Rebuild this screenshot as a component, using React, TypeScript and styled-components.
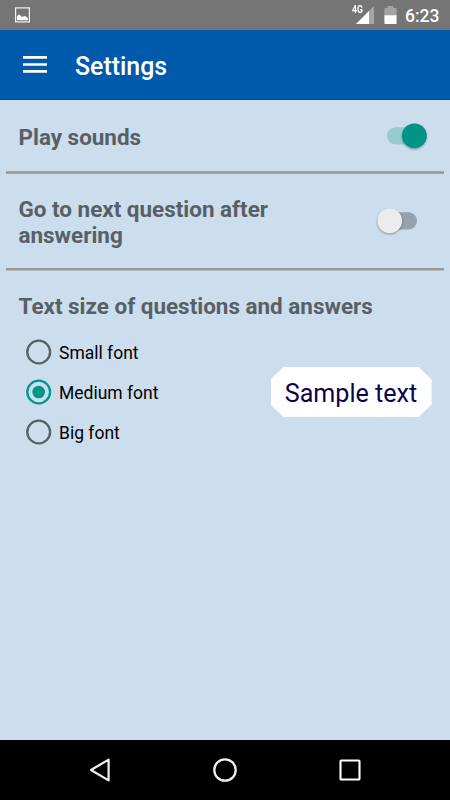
import React, { useState } from "react";
import styled, { createGlobalStyle } from "styled-components";

const GlobalStyle = createGlobalStyle`
  * { box-sizing: border-box; }
  body { margin: 0; font-family: Roboto, "Liberation Sans", sans-serif; }
`;

const Screen = styled.div`
  display: flex;
  flex-direction: column;
  width: 450px;
  height: 800px;
  overflow: hidden;
  background: #ccdded;
`;

const StatusBar = styled.div`
  display: flex;
  align-items: center;
  justify-content: space-between;
  height: 30px;
  padding: 0 10px 0 15px;
  background: #757575;
`;

const StatusIcons = styled.div`
  display: flex;
  align-items: center;
`;

const Clock = styled.span`
  width: 35px;
  margin-left: 8px;
  padding-top: 2px;
  font-size: 17.5px;
  font-weight: 500;
  line-height: 20px;
  white-space: nowrap;
  color: #fff;
`;

const AppBar = styled.header`
  display: flex;
  align-items: center;
  height: 70px;
  padding-left: 23px;
  background: #005aab;
  border-bottom: 1px solid #004a98;
`;

const Title = styled.h1`
  margin: 5px 0 0 28px;
  font-size: 24.9px;
  font-weight: 500;
  line-height: 30px;
  color: #fff;
`;

const Content = styled.main`
  flex: 1;
  padding: 0 6px;
`;

const SettingRow = styled.div<{ $height: number }>`
  display: flex;
  align-items: center;
  justify-content: space-between;
  height: ${(p) => p.$height}px;
  padding: 0 17px 0 12.5px;
`;

const Heading = styled.h2`
  width: 290px;
  margin: 2px 0 0;
  font-size: 22.45px;
  font-weight: 700;
  line-height: 26px;
  color: #566066;
`;

const SectionHeading = styled(Heading)`
  width: auto;
  margin: 22px 12.5px 0;
`;

const Divider = styled.div<{ $soft?: boolean }>`
  height: 3px;
  background: ${(p) =>
    p.$soft
      ? "linear-gradient(#9b9996 0 2px, #b3bac1 2px)"
      : "linear-gradient(#a4a6a8 0 1px, #999695 1px 2px, #a4a6a8 2px)"};
`;

const FontSection = styled.div`
  display: flex;
  justify-content: space-between;
  align-items: center;
  height: 120px;
  margin-top: 13px;
  padding: 0 12.5px 0 19px;
`;

const RadioList = styled.div`
  display: flex;
  flex-direction: column;
`;

const RadioRow = styled.div`
  display: flex;
  align-items: center;
  gap: 7px;
  height: 40px;
  font-size: 17.5px;
  line-height: 20px;
  color: #000;
`;

const RadioLabel = styled.span`
  padding-top: 1px;
`;

const Sample = styled.div`
  width: 161px;
  height: 50px;
  padding-top: 3px;
  clip-path: polygon(13px 0, 148px 0, 100% 12.5px, 100% 37.5px, 148px 100%, 13px 100%, 0 37.5px, 0 12.5px);
  background: #fff;
  color: #0c0050;
  font-size: 25.1px;
  line-height: 48px;
  text-align: center;
  white-space: nowrap;
`;

const NavBar = styled.nav`
  display: flex;
  align-items: center;
  justify-content: space-between;
  height: 60px;
  padding: 0 85px;
  background: #000;
`;

const Icon = styled.svg`
  display: block;
  flex: none;
  overflow: visible;
`;

const Toggle = styled(Icon)`
  cursor: pointer;
`;

const Thumb = styled.circle`
  filter: drop-shadow(0 1.5px 1px rgba(0, 0, 0, 0.35));
`;

function PictureIcon() {
  return (
    <Icon width="15" height="16" viewBox="0 0 15 16">
      <rect x="0.6" y="0.9" width="13.8" height="14" fill="none" stroke="#f4f4f4" strokeWidth="1.2" />
      <path d="M2 13.2V9.6L3.7 7.6 5.2 8.2 7 10 9.4 8.9 11.3 9.8 13 11.5V13.2Z" fill="#fff" />
    </Icon>
  );
}

const NetworkLabel = styled.span`
  align-self: flex-start;
  width: 12px;
  margin: 1px -7.5px 0 0;
  font-size: 10px;
  font-weight: 700;
  line-height: 10px;
  transform: scaleX(0.86);
  transform-origin: left;
  color: #fff;
`;

function SignalIcon() {
  return (
    <Icon width="18" height="18" viewBox="0 0 18 18">
      <path d="M0 18 18 0V18Z" fill="#a5a5a5" />
      <path d="M0 18 13 5V18Z" fill="#fff" />
    </Icon>
  );
}

const BatteryBox = styled.div`
  margin-left: 10px;
`;

function BatteryIcon() {
  return (
    <Icon width="13" height="18" viewBox="0 0 13 18">
      <path d="M1.3 2H3.7V0H9.3V2H11.7Q12.6 2 12.6 3V9.5H0.4V3Q0.4 2 1.3 2Z" fill="#a3a3a3" />
      <path d="M0.4 9.3H12.6V17Q12.6 18 11.7 18H1.3Q0.4 18 0.4 17Z" fill="#fff" />
    </Icon>
  );
}

function Switch({ on, label, onToggle }: { on: boolean; label: string; onToggle: () => void }) {
  return (
    <Toggle width="50" height="26" viewBox="0 0 50 26" role="switch" aria-checked={on} aria-label={label} onClick={onToggle}>
      <rect x={on ? 10 : 3} y="4.2" width="37" height="17.2" rx="8.6" fill={on ? "#96cbd1" : "#94a2ad"} />
      <Thumb cx={on ? 37.4 : 12.7} cy="12.8" r="12.4" fill={on ? "#009485" : "#ececec"} />
    </Toggle>
  );
}

function RadioIcon({ checked }: { checked: boolean }) {
  return (
    <Icon width="27" height="26" viewBox="0 0 27 26">
      <circle cx="13.7" cy="13" r="11.4" fill="none" stroke={checked ? "#009688" : "#566066"} strokeWidth="2.3" />
      {checked && <circle cx="13.7" cy="13" r="6.3" fill="#009688" />}
    </Icon>
  );
}

const fonts = ["Small font", "Medium font", "Big font"];

export default function App() {
  const [sounds, setSounds] = useState(true);
  const [autoNext, setAutoNext] = useState(false);
  const [font, setFont] = useState("Medium font");

  return (
    <Screen>
      <GlobalStyle />
      <StatusBar>
        <PictureIcon />
        <StatusIcons>
          <NetworkLabel>4G</NetworkLabel>
          <SignalIcon />
          <BatteryBox>
            <BatteryIcon />
          </BatteryBox>
          <Clock>6:23</Clock>
        </StatusIcons>
      </StatusBar>
      <AppBar>
        <Icon width="24" height="17" viewBox="0 0 24 17">
          <path d="M0 1.4H24M0 8.5H24M0 15.4H24" stroke="#fff" strokeWidth="2.6" />
        </Icon>
        <Title>Settings</Title>
      </AppBar>
      <Content>
        <SettingRow $height={71}>
          <Heading>Play sounds</Heading>
          <Switch on={sounds} label="Play sounds" onToggle={() => setSounds(!sounds)} />
        </SettingRow>
        <Divider />
        <SettingRow $height={94}>
          <Heading>Go to next question after answering</Heading>
          <Switch on={autoNext} label="Go to next question after answering" onToggle={() => setAutoNext(!autoNext)} />
        </SettingRow>
        <Divider $soft />
        <SectionHeading>Text size of questions and answers</SectionHeading>
        <FontSection>
          <RadioList role="radiogroup">
            {fonts.map((name) => (
              <RadioRow key={name} role="radio" aria-checked={name === font} onClick={() => setFont(name)}>
                <RadioIcon checked={name === font} />
                <RadioLabel>{name}</RadioLabel>
              </RadioRow>
            ))}
          </RadioList>
          <Sample>Sample text</Sample>
        </FontSection>
      </Content>
      <NavBar>
        <Icon width="30" height="30" viewBox="0 0 30 30">
          <path d="M6 15 23.6 4.6V25.4Z" fill="none" stroke="#f0f0f0" strokeWidth="2.2" strokeLinejoin="round" />
        </Icon>
        <Icon width="30" height="30" viewBox="0 0 30 30">
          <circle cx="15" cy="15" r="10.7" fill="none" stroke="#f0f0f0" strokeWidth="2.3" />
        </Icon>
        <Icon width="30" height="30" viewBox="0 0 30 30">
          <rect x="5.5" y="5.5" width="19" height="19" rx="0.8" fill="none" stroke="#fff" strokeWidth="2.1" />
        </Icon>
      </NavBar>
    </Screen>
  );
}
